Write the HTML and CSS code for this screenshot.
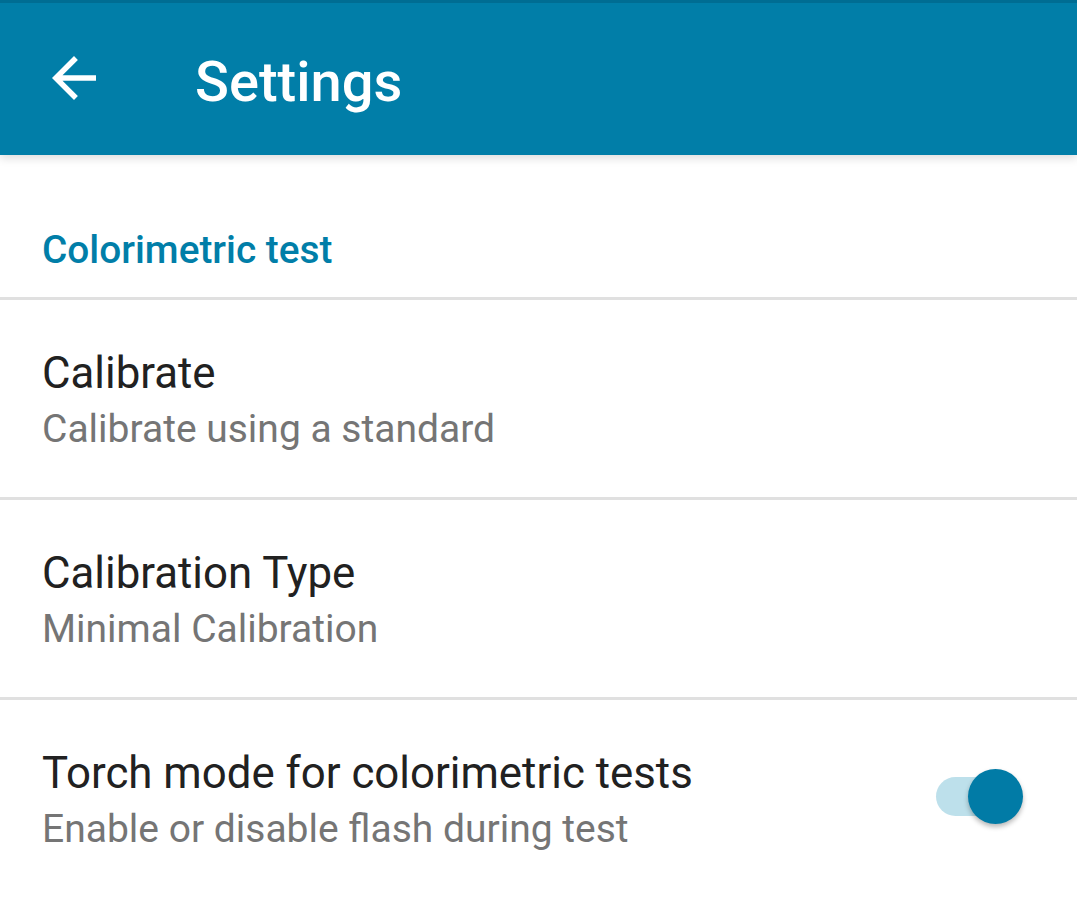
FILE: index.html
```html
<!DOCTYPE html>
<html>
<head>
<meta charset="utf-8">
<link rel="stylesheet" href="styles.css">
</head>
<body>
<header class="toolbar">
  <svg class="back" viewBox="0 0 24 24" width="66" height="66"><path fill="#ffffff" d="M20 11H7.83l5.59-5.59L12 4l-8 8 8 8 1.41-1.41L7.83 13H20v-2z"/></svg>
  <div class="title">Settings</div>
</header>
<main class="list">
  <div class="category">Colorimetric test</div>
  <div class="divider"></div>
  <div class="item">
    <div class="texts">
      <div class="item-title">Calibrate</div>
      <div class="item-summary">Calibrate using a standard</div>
    </div>
  </div>
  <div class="divider"></div>
  <div class="item">
    <div class="texts">
      <div class="item-title">Calibration Type</div>
      <div class="item-summary">Minimal Calibration</div>
    </div>
  </div>
  <div class="divider"></div>
  <div class="item">
    <div class="texts">
      <div class="item-title">Torch mode for colorimetric tests</div>
      <div class="item-summary">Enable or disable flash during test</div>
    </div>
    <div class="switch">
      <div class="track"></div>
      <div class="thumb"></div>
    </div>
  </div>
</main>
</body>
</html>
```
FILE: styles.css
```css
html, body {
  margin: 0;
  padding: 0;
  background: #ffffff;
  font-family: Roboto, "Liberation Sans", sans-serif;
}
.toolbar {
  position: relative;
  z-index: 2;
  height: 152px;
  border-top: 3px solid #006d93;
  background: #017ea8;
  display: flex;
  align-items: center;
  box-shadow: 0 3px 9px rgba(0, 0, 0, 0.14);
}
.back {
  display: block;
  margin-left: 41px;
  margin-top: -2px;
  flex: none;
}
.title {
  margin-left: 88px;
  margin-top: 6px;
  color: #ffffff;
  font-size: 56px;
  font-weight: 500;
  line-height: 64px;
}
.list {
  display: flex;
  flex-direction: column;
}
.category {
  padding: 72px 0 24px 42px;
  color: #017ea8;
  font-size: 38.8px;
  font-weight: 500;
  line-height: 46px;
}
.divider {
  height: 3px;
  background: #e0e0e0;
}
.item {
  display: flex;
  align-items: center;
  padding: 47px 0 42px 42px;
}
.texts {
  flex: 1;
}
.item-title {
  color: #212121;
  font-size: 43.8px;
  line-height: 52px;
}
.item-summary {
  margin-top: 4px;
  color: #757575;
  font-size: 39px;
  line-height: 52px;
}
.switch {
  position: relative;
  width: 87px;
  height: 55px;
  margin-right: 54px;
  margin-top: -10px;
}
.track {
  position: absolute;
  left: 0;
  top: 8px;
  width: 80px;
  height: 39px;
  border-radius: 20px;
  background: #bde0eb;
}
.thumb {
  position: absolute;
  right: 0;
  top: 0;
  width: 55px;
  height: 55px;
  border-radius: 50%;
  background: #017ba6;
  box-shadow: 0 3px 5px rgba(0, 0, 0, 0.28);
}
```
